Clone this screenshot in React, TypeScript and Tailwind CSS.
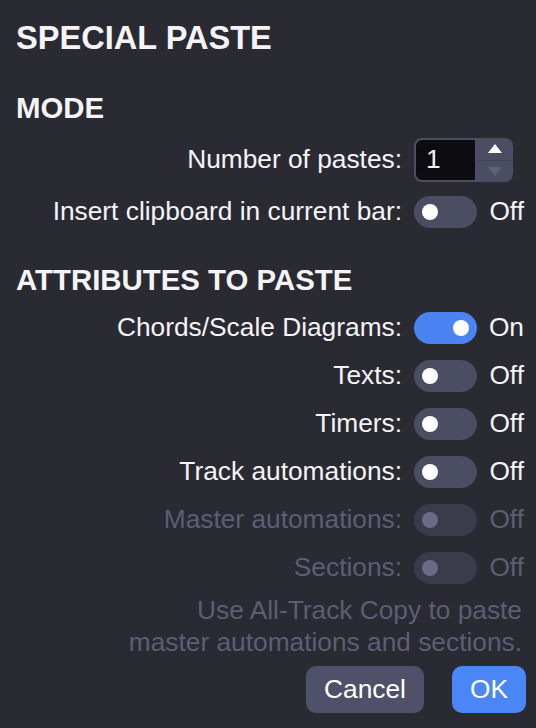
import React, { useState } from "react"

function Toggle({ on, disabled, onChange }: { on: boolean; disabled?: boolean; onChange?: () => void }) {
    const track = disabled ? "bg-[#3a3b4b]" : on ? "bg-[#4a84f3]" : "bg-[#4b4d63]"
    const knob = disabled ? "bg-[#6a6c86]" : "bg-white"
    return (
        <button
            type="button"
            disabled={disabled}
            onClick={onChange}
            className={`w-16 h-8 rounded-full flex items-center px-2 ${track} ${on ? "justify-end" : "justify-start"}`}
        >
            <span className={`w-4 h-4 rounded-full ${knob}`} />
        </button>
    )
}

function Row({ label, on, disabled, onChange }: { label: string; on: boolean; disabled?: boolean; onChange?: () => void }) {
    return (
        <div className="h-12 flex items-center justify-end">
            <span className={disabled ? "text-[#5c5e73]" : "text-[#f4f4f6]"}>{label}</span>
            <div className="ml-3 flex items-center w-[110px]">
                <Toggle on={on} disabled={disabled} onChange={onChange} />
                <span className={`ml-3 ${disabled ? "text-[#5c5e73]" : "text-[#f4f4f6]"}`}>{on ? "On" : "Off"}</span>
            </div>
        </div>
    )
}

export default function App() {
    const [count, setCount] = useState(1)
    const [insert, setInsert] = useState(false)
    const [attrs, setAttrs] = useState({ chords: true, texts: false, timers: false, track: false })

    const flip = (k: keyof typeof attrs) => setAttrs(a => ({ ...a, [k]: !a[k] }))

    return (
        <div className="w-[536px] h-[728px] bg-[#2a2a33] text-[26.3px] text-[#f4f4f6] pl-4 pr-[12px] font-['Liberation_Sans',Arial,sans-serif]">
            {/* Title */}
            <div className="h-[76px] flex items-center text-[32.6px] font-bold leading-none">SPECIAL PASTE</div>

            {/* Mode */}
            <div className="h-[60px] pt-1 flex items-center text-[29.4px] font-bold leading-none">MODE</div>

            <div className="h-12 flex items-center justify-end">
                <span>Number of pastes:</span>
                <div className="ml-3 w-[110px] flex items-center">
                    <div className="w-[99px] h-11 flex rounded-lg overflow-hidden bg-[#4b4d63]">
                        <div className="flex-1 bg-[#0d0d11] border-2 border-[#4b4d63] rounded-l-lg flex items-center pl-[10px]">{count}</div>
                        <div className="w-9 flex flex-col">
                            <button type="button" onClick={() => setCount(c => c + 1)} className="flex-1 flex items-center justify-center border-b border-[#42445a]">
                                <svg width="14" height="9" viewBox="0 0 14 9"><path d="M7 0L14 9H0Z" fill="#ffffff" /></svg>
                            </button>
                            <button type="button" onClick={() => setCount(c => Math.max(1, c - 1))} className="flex-1 flex items-center justify-center">
                                <svg width="14" height="9" viewBox="0 0 14 9"><path d="M0 0H14L7 9Z" fill="#5f6179" /></svg>
                            </button>
                        </div>
                    </div>
                </div>
            </div>
            <div className="mt-1">
                <Row label="Insert clipboard in current bar:" on={insert} onChange={() => setInsert(v => !v)} />
            </div>

            {/* Attributes */}
            <div className="h-[68px] pt-5 flex items-center text-[29.4px] font-bold leading-none">ATTRIBUTES TO PASTE</div>

            <Row label="Chords/Scale Diagrams:" on={attrs.chords} onChange={() => flip("chords")} />
            <Row label="Texts:" on={attrs.texts} onChange={() => flip("texts")} />
            <Row label="Timers:" on={attrs.timers} onChange={() => flip("timers")} />
            <Row label="Track automations:" on={attrs.track} onChange={() => flip("track")} />
            <Row label="Master automations:" on={false} disabled />
            <Row label="Sections:" on={false} disabled />

            <div className="mt-[2px] text-right leading-8 text-[#5c5e73] pr-[2px]">
                <div>Use All-Track Copy to paste</div>
                <div>master automations and sections.</div>
            </div>

            <div className="mt-2 -mr-[2px] flex justify-end gap-7">
                <button type="button" className="h-[47px] w-[118px] rounded-[10px] bg-[#4f5169] text-white">Cancel</button>
                <button type="button" className="h-[47px] w-[74px] rounded-[10px] bg-[#4a86f5] text-white">OK</button>
            </div>
        </div>
    )
}
